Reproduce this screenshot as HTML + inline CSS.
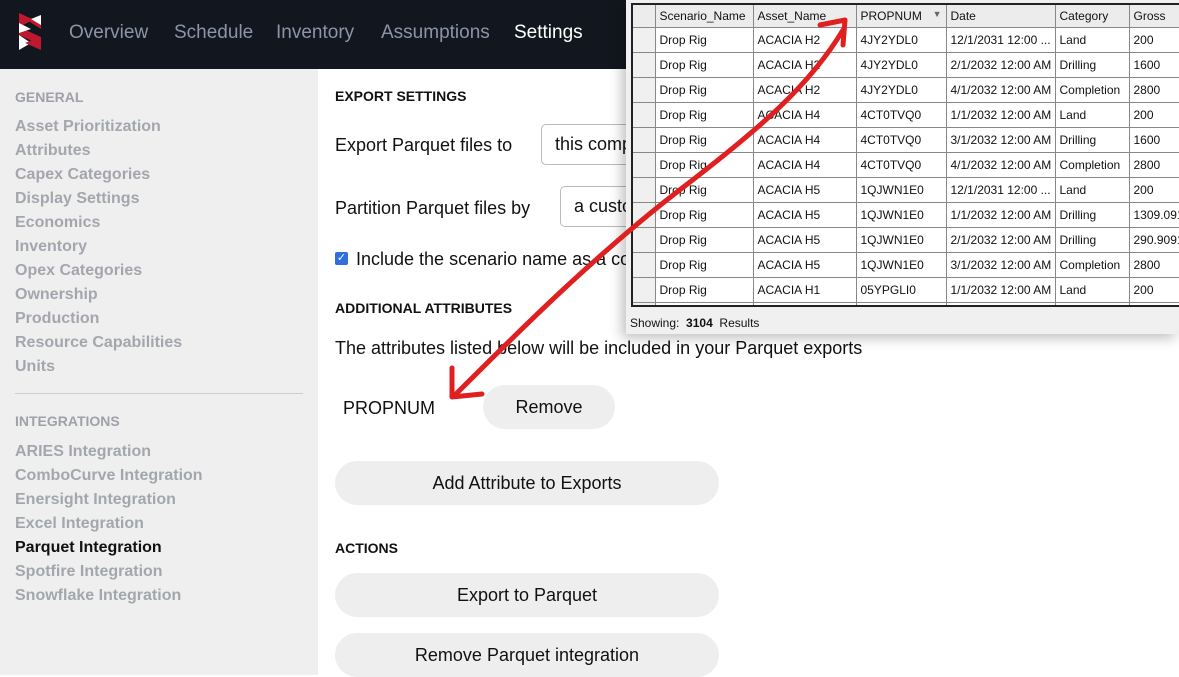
<!DOCTYPE html>
<html><head><meta charset="utf-8"><style>
*{margin:0;padding:0;box-sizing:border-box}
body{width:1179px;height:675px;overflow:hidden;position:relative;font-family:"Liberation Sans",sans-serif;background:#fff}
.hdr{position:absolute;left:0;top:0;width:1179px;height:69px;background:#12161e}
.nav{position:absolute;top:22px;font-size:19px;color:#8b95a8}
.side{position:absolute;left:0;top:69px;width:318px;height:606px;background:#efefef}
.lbl{position:absolute;left:15px;font-size:14px;font-weight:bold;color:#9ea2a8}
.it{position:absolute;left:15px;font-size:16px;font-weight:bold;color:#a3a7ad}
.t{position:absolute;color:#111;font-size:18px;white-space:nowrap}
.h{position:absolute;left:335px;font-size:14px;font-weight:bold;color:#111}
.btn{position:absolute;background:#eee;border-radius:22px;text-align:center;font-size:18px;color:#111}
.inp{position:absolute;border:1px solid #bbb;border-radius:5px;background:#fff;font-size:18px;color:#111;padding-left:13px;white-space:nowrap;overflow:hidden}
.win{position:absolute;left:626px;top:0;width:553px;height:334px;background:#f0f0f0;box-shadow:-4px 4px 12px rgba(0,0,0,.25)}
table{position:absolute;left:5px;top:3px;width:552px;table-layout:fixed;border-collapse:collapse;font-size:12px;background:#fff;border:2px solid #222}
td{border:1px solid #888;height:25px;padding-left:4px;white-space:nowrap;overflow:hidden;color:#111}
tr.hd td{background:#ececec;height:23px}
tr.sp td{height:4px;font-size:0;line-height:0;padding:0}
td.rh{background:#f0f0f0;border-left:none}
</style></head><body>
<div class="hdr">
<svg style="position:absolute;left:19px;top:13px" width="24" height="38" viewBox="0 0 24 38"><polygon points="0,2 22,16 22,10 0,0" fill="#c0182e"/><polygon points="0,0 12,8 0,14" fill="#c0182e"/><polygon points="22,2 22,12 12,6" fill="#fff"/><polygon points="0,14 22,24 22,32 0,22" fill="#c0182e"/><polygon points="0,22 0,37 12,30" fill="#fff"/><polygon points="22,24 22,37 6,30" fill="#c0182e"/><polygon points="0,10 12,16 0,20" fill="#fff"/></svg>
<div class="nav" style="left:69px">Overview</div>
<div class="nav" style="left:174px">Schedule</div>
<div class="nav" style="left:276px">Inventory</div>
<div class="nav" style="left:381px">Assumptions</div>
<div class="nav" style="left:514px;color:#fff">Settings</div>
</div>
<div class="side">
<div class="lbl" style="top:20px">GENERAL</div>
<div class="it" style="top:49px">Asset Prioritization</div>
<div class="it" style="top:73px">Attributes</div>
<div class="it" style="top:97px">Capex Categories</div>
<div class="it" style="top:121px">Display Settings</div>
<div class="it" style="top:145px">Economics</div>
<div class="it" style="top:169px">Inventory</div>
<div class="it" style="top:193px">Opex Categories</div>
<div class="it" style="top:217px">Ownership</div>
<div class="it" style="top:241px">Production</div>
<div class="it" style="top:265px">Resource Capabilities</div>
<div class="it" style="top:289px">Units</div>
<div style="position:absolute;left:15px;top:324px;width:288px;height:1px;background:#ccc"></div>
<div class="lbl" style="top:344px">INTEGRATIONS</div>
<div class="it" style="top:374px">ARIES Integration</div>
<div class="it" style="top:398px">ComboCurve Integration</div>
<div class="it" style="top:422px">Enersight Integration</div>
<div class="it" style="top:446px">Excel Integration</div>
<div class="it" style="top:470px;color:#111">Parquet Integration</div>
<div class="it" style="top:494px">Spotfire Integration</div>
<div class="it" style="top:518px">Snowflake Integration</div>
</div>
<div class="h" style="top:88px">EXPORT SETTINGS</div>
<div class="t" style="left:335px;top:135px">Export Parquet files to</div>
<div class="inp" style="left:541px;top:124px;width:120px;height:41px;line-height:39px">this computer</div>
<div class="t" style="left:335px;top:198px">Partition Parquet files by</div>
<div class="inp" style="left:560px;top:186px;width:100px;height:41px;line-height:39px">a custom</div>
<div style="position:absolute;left:335px;top:252px;width:13px;height:13px;background:#2f6fe0;border-radius:2px;color:#fff;font-size:11px;line-height:13px;text-align:center">✓</div>
<div class="t" style="left:356px;top:249px">Include the scenario name as a column</div>
<div class="h" style="top:300px">ADDITIONAL ATTRIBUTES</div>
<div class="t" style="left:335px;top:338px">The attributes listed below will be included in your Parquet exports</div>
<div class="t" style="left:343px;top:398px">PROPNUM</div>
<div class="btn" style="left:483px;top:385px;width:132px;height:44px;line-height:44px">Remove</div>
<div class="btn" style="left:335px;top:461px;width:384px;height:44px;line-height:44px">Add Attribute to Exports</div>
<div class="h" style="top:540px">ACTIONS</div>
<div class="btn" style="left:335px;top:573px;width:384px;height:44px;line-height:44px">Export to Parquet</div>
<div class="btn" style="left:335px;top:633px;width:384px;height:44px;line-height:44px">Remove Parquet integration</div>
<div class="win">
<table>
<colgroup><col style="width:23px"><col style="width:98px"><col style="width:103px"><col style="width:90px"><col style="width:109px"><col style="width:74px"><col style="width:55px"></colgroup>
<tr class="hd"><td class="rh"></td><td>Scenario_Name</td><td>Asset_Name</td><td>PROPNUM <span style="float:right;margin-right:4px;color:#666;font-size:9px">▼</span></td><td>Date</td><td>Category</td><td style="border-right:none">Gross</td></tr>
<tr><td class="rh"></td><td>Drop Rig</td><td>ACACIA H2</td><td>4JY2YDL0</td><td>12/1/2031 12:00 ...</td><td>Land</td><td>200</td></tr>
<tr><td class="rh"></td><td>Drop Rig</td><td>ACACIA H2</td><td>4JY2YDL0</td><td>2/1/2032 12:00 AM</td><td>Drilling</td><td>1600</td></tr>
<tr><td class="rh"></td><td>Drop Rig</td><td>ACACIA H2</td><td>4JY2YDL0</td><td>4/1/2032 12:00 AM</td><td>Completion</td><td>2800</td></tr>
<tr><td class="rh"></td><td>Drop Rig</td><td>ACACIA H4</td><td>4CT0TVQ0</td><td>1/1/2032 12:00 AM</td><td>Land</td><td>200</td></tr>
<tr><td class="rh"></td><td>Drop Rig</td><td>ACACIA H4</td><td>4CT0TVQ0</td><td>3/1/2032 12:00 AM</td><td>Drilling</td><td>1600</td></tr>
<tr><td class="rh"></td><td>Drop Rig</td><td>ACACIA H4</td><td>4CT0TVQ0</td><td>4/1/2032 12:00 AM</td><td>Completion</td><td>2800</td></tr>
<tr><td class="rh"></td><td>Drop Rig</td><td>ACACIA H5</td><td>1QJWN1E0</td><td>12/1/2031 12:00 ...</td><td>Land</td><td>200</td></tr>
<tr><td class="rh"></td><td>Drop Rig</td><td>ACACIA H5</td><td>1QJWN1E0</td><td>1/1/2032 12:00 AM</td><td>Drilling</td><td>1309.091</td></tr>
<tr><td class="rh"></td><td>Drop Rig</td><td>ACACIA H5</td><td>1QJWN1E0</td><td>2/1/2032 12:00 AM</td><td>Drilling</td><td>290.9091</td></tr>
<tr><td class="rh"></td><td>Drop Rig</td><td>ACACIA H5</td><td>1QJWN1E0</td><td>3/1/2032 12:00 AM</td><td>Completion</td><td>2800</td></tr>
<tr><td class="rh"></td><td>Drop Rig</td><td>ACACIA H1</td><td>05YPGLI0</td><td>1/1/2032 12:00 AM</td><td>Land</td><td>200</td></tr>
<tr class="sp"><td class="rh"></td><td></td><td></td><td></td><td></td><td></td><td></td></tr>
</table>
<div style="position:absolute;left:4px;top:316px;font-size:12px;color:#111">Showing:&nbsp; <b>3104</b>&nbsp; Results</div>
</div>
<svg style="position:absolute;left:0;top:0" width="1179" height="675"><g fill="none" stroke="#e02020" stroke-width="5" stroke-linecap="round" stroke-linejoin="round"><path d="M455 395 C 520 330, 600 250, 690 182 C 760 128, 810 85, 843 30"/><path d="M820 25 L 845 20 L 843 45"/><path d="M452 368 L 452 397 L 482 394"/></g></svg>
</body></html>
